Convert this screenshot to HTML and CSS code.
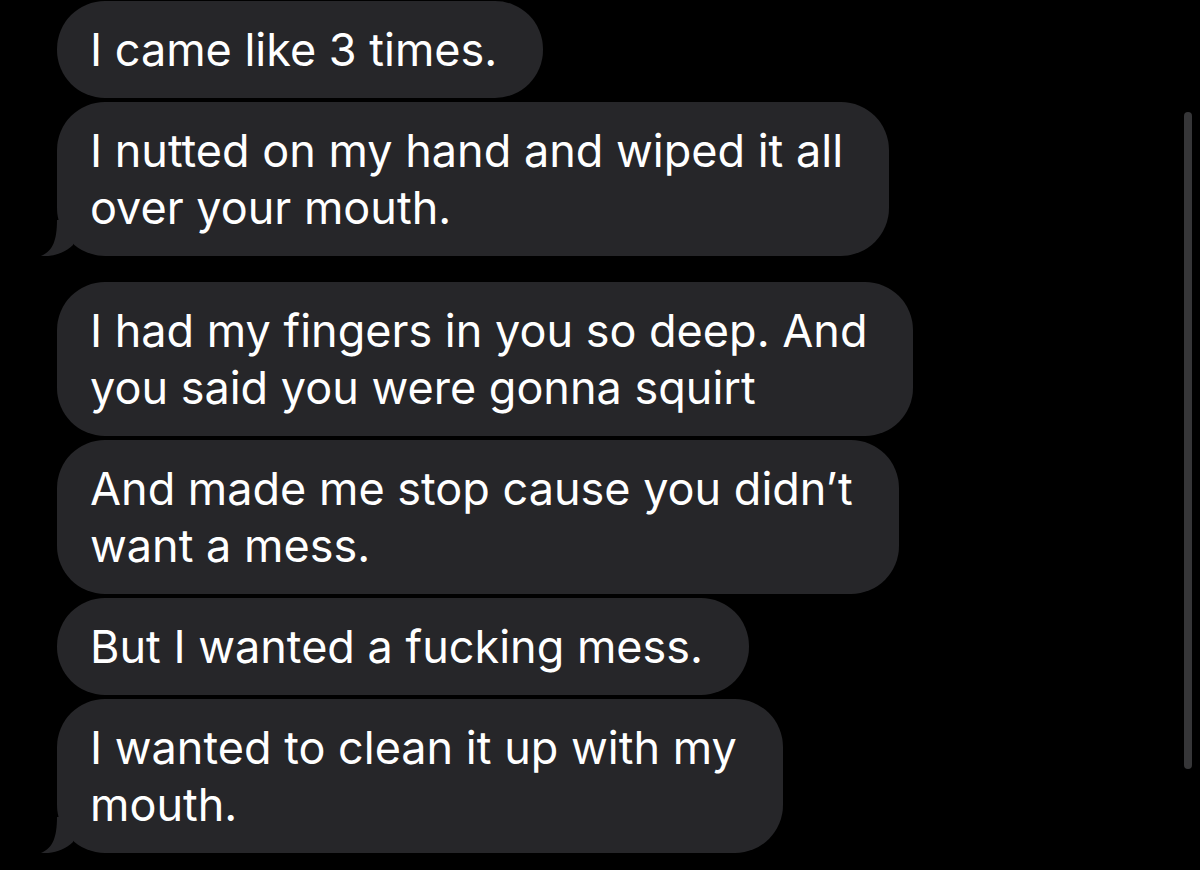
FILE: index.html
```html
<!DOCTYPE html>
<html lang="en">
<head>
    <meta charset="UTF-8">
    <meta name="viewport" content="width=device-width, initial-scale=1.0">
    <title>Messages</title>
    <link rel="stylesheet" href="styles.css">
</head>
<body>
    <div class="thread">
        <div class="bubble">I came like 3 times.</div>
        <div class="bubble has-tail">
            I nutted on my hand and wiped it all<br>over your mouth.
            <svg class="tail" viewBox="0 0 70 36" width="70" height="36"><path d="M18 0 C18 20 14 31 2 36 C14 37 26 33 34 25 L34 0 Z"/></svg>
        </div>

        <div class="bubble new-group">I had my fingers in you so deep. And<br>you said you were gonna squirt</div>
        <div class="bubble">And made me stop cause you didn’t<br>want a mess.</div>
        <div class="bubble">But I wanted a fucking mess.</div>
        <div class="bubble has-tail">
            I wanted to clean it up with my<br>mouth.
            <svg class="tail" viewBox="0 0 70 36" width="70" height="36"><path d="M18 0 C18 20 14 31 2 36 C14 37 26 33 34 25 L34 0 Z"/></svg>
        </div>
    </div>

    <!-- scroll indicator -->
    <div class="scrollbar"></div>
</body>
</html>
```

FILE: styles.css
```css
body {
    margin: 0;
    background: #000;
    font-family: Inter, "Noto Sans", sans-serif;
    overflow: hidden;
}
.thread {
    display: flex;
    flex-direction: column;
    align-items: flex-start;
    gap: 4px;
    padding-top: 1px;
    padding-left: 57px;
}
.bubble {
    position: relative;
    background: #262629;
    color: #fff;
    font-size: 45px;
    line-height: 57px;
    padding: 20px 46px 20px 33px;
    border-radius: 48px;
}
.new-group {
    margin-top: 22px;
}
.tail {
    position: absolute;
    left: -18px;
    bottom: 0;
    fill: #262629;
}
.scrollbar {
    position: absolute;
    top: 112px;
    left: 1184px;
    width: 8px;
    height: 657px;
    border-radius: 4px;
    background: #363638;
}
```
